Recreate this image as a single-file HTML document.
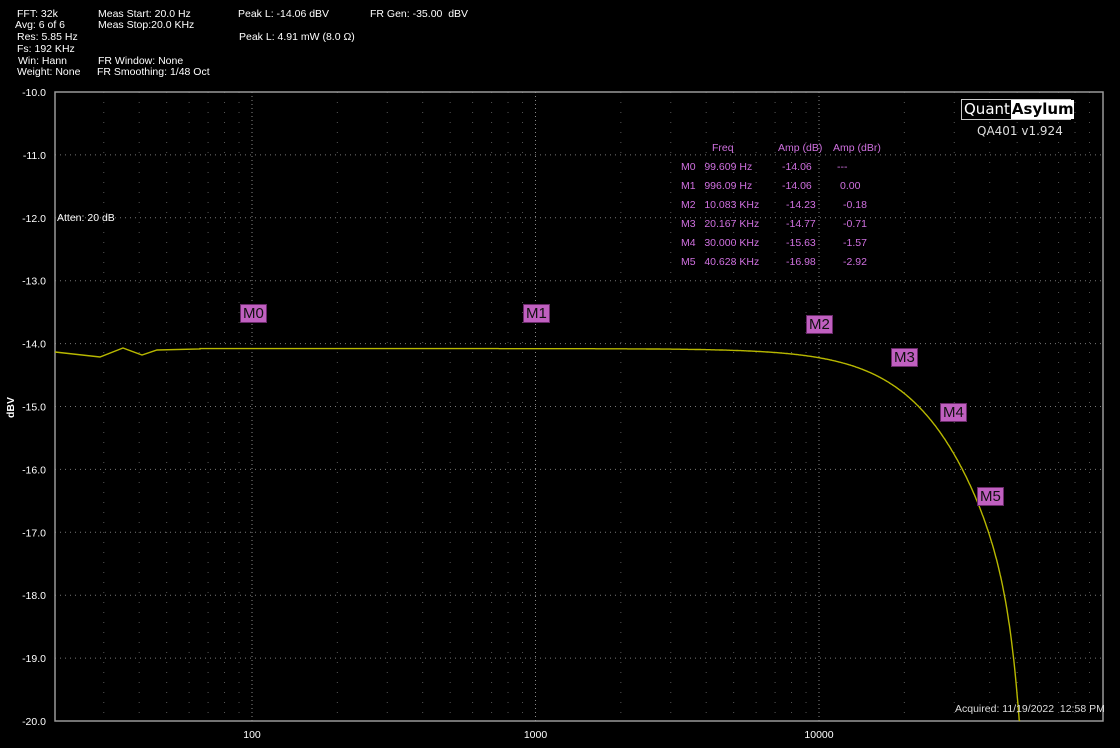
<!DOCTYPE html>
<html><head><meta charset="utf-8"><style>
html,body{margin:0;padding:0;background:#000;width:1120px;height:748px;overflow:hidden}
body{position:relative;font-family:"Liberation Sans",Arial,sans-serif;color:#fff;font-size:10.5px}
.t{position:absolute;white-space:nowrap}
.mk{position:absolute;background:#c060c0;border:1px solid #6a2a6a;color:#111;font-size:15px;line-height:17px;padding:0 2px;width:21px;height:17px}
.tb{position:absolute;color:#d070e0;font-size:10.5px;white-space:nowrap}
</style></head><body>
<div class="t" style="left:17px;top:8px">FFT: 32k</div>
<div class="t" style="left:15px;top:19px">Avg: 6 of 6</div>
<div class="t" style="left:17px;top:31px">Res: 5.85 Hz</div>
<div class="t" style="left:17px;top:43px">Fs: 192 KHz</div>
<div class="t" style="left:18px;top:55px">Win: Hann</div>
<div class="t" style="left:17px;top:66px">Weight: None</div>
<div class="t" style="left:98px;top:8px">Meas Start: 20.0 Hz</div>
<div class="t" style="left:98px;top:19px">Meas Stop:20.0 KHz</div>
<div class="t" style="left:98px;top:55px">FR Window: None</div>
<div class="t" style="left:97px;top:66px">FR Smoothing: 1/48 Oct</div>
<div class="t" style="left:238px;top:8px">Peak L: -14.06 dBV</div>
<div class="t" style="left:239px;top:31px">Peak L: 4.91 mW (8.0 Ω)</div>
<div class="t" style="left:370px;top:8px">FR Gen: -35.00 &nbsp;dBV</div>
<svg id="s" width="1120" height="748" style="position:absolute;left:0;top:0"></svg>
<div class="t" style="left:57px;top:212px">Atten: 20 dB</div>
<div class="t" style="left:5px;transform:rotate(-90deg);transform-origin:left top;font-weight:bold;top:418px">dBV</div>
<div style="position:absolute;left:961px;top:99px;width:110px;height:21px;border:1px solid #ccc;box-sizing:border-box;font-family:'DejaVu Sans',sans-serif;font-size:15px;line-height:19px;display:flex">
<span style="color:#fff;padding:0 1px 0 2px">Quant</span><span style="background:#fff;color:#000;font-weight:bold;flex:1;padding-left:1px">Asylum</span></div>
<div class="t" style="left:977px;top:124px;font-size:12px;font-family:'DejaVu Sans',sans-serif;color:#ddd">QA401 v1.924</div>
<div class="tb" style="left:712px;top:142px">Freq</div>
<div class="tb" style="left:778px;top:142px">Amp (dB)</div>
<div class="tb" style="left:833px;top:142px">Amp (dBr)</div>
<div class="tb" style="left:681px;top:161px">M0&nbsp;&nbsp; 99.609 Hz</div><div class="tb" style="left:782px;top:161px">-14.06</div><div class="tb" style="left:837px;top:161px">---</div>
<div class="tb" style="left:681px;top:180px">M1&nbsp;&nbsp; 996.09 Hz</div><div class="tb" style="left:782px;top:180px">-14.06</div><div class="tb" style="left:840px;top:180px">0.00</div>
<div class="tb" style="left:681px;top:199px">M2&nbsp;&nbsp; 10.083 KHz</div><div class="tb" style="left:786px;top:199px">-14.23</div><div class="tb" style="left:843px;top:199px">-0.18</div>
<div class="tb" style="left:681px;top:218px">M3&nbsp;&nbsp; 20.167 KHz</div><div class="tb" style="left:786px;top:218px">-14.77</div><div class="tb" style="left:843px;top:218px">-0.71</div>
<div class="tb" style="left:681px;top:237px">M4&nbsp;&nbsp; 30.000 KHz</div><div class="tb" style="left:786px;top:237px">-15.63</div><div class="tb" style="left:843px;top:237px">-1.57</div>
<div class="tb" style="left:681px;top:256px">M5&nbsp;&nbsp; 40.628 KHz</div><div class="tb" style="left:786px;top:256px">-16.98</div><div class="tb" style="left:843px;top:256px">-2.92</div>
<div class="mk" style="left:240px;top:304px">M0</div>
<div class="mk" style="left:523px;top:304px">M1</div>
<div class="mk" style="left:806px;top:315px">M2</div>
<div class="mk" style="left:891px;top:348px">M3</div>
<div class="mk" style="left:940px;top:403px">M4</div>
<div class="mk" style="left:977px;top:487px">M5</div>
<div class="t" style="left:955px;top:703px;color:#ddd">Acquired: 11/19/2022 &nbsp;12:58 PM</div>
<script>
var s=document.getElementById('s'),h='';
var L=55,R=1103,T=92,B=721,D=283.5;
function X(f){return 252+(Math.log10(f)-2)*D}
function Y(d){return T+(-10-d)*(B-T)/10}
for(var i=0;i<=10;i++){var y=Y(-10-i);if(i>0&&i<10)h+='<line x1="'+L+'" x2="'+R+'" y1="'+y+'" y2="'+y+'" stroke="#777" stroke-dasharray="1 4"/>';
h+='<text x="46" y="'+(y+4)+'" fill="#fff" font-size="10.5" text-anchor="end" font-family="Liberation Sans">'+(-10-i).toFixed(1)+'</text>';}
var dec=[10,100,1000,10000];
dec.forEach(function(d){for(var k=1;k<10;k++){var f=d*k;if(f<=20||f>=100000)continue;var x=X(f);
h+='<line x1="'+x+'" x2="'+x+'" y1="'+T+'" y2="'+B+'" stroke="'+(k==1?'#888':'#555')+'" stroke-dasharray="1 '+(k==1?3:'9')+'"/>';}});
[100,1000,10000].forEach(function(f){h+='<text x="'+X(f)+'" y="738" fill="#fff" font-size="10.5" text-anchor="middle" font-family="Liberation Sans">'+f+'</text>';});
h+='<rect x="'+L+'" y="'+T+'" width="'+(R-L)+'" height="'+(B-T)+'" fill="none" stroke="#999" stroke-width="1.5"/>';
var pts=[[55,352],[100,357],[123,348],[142,355],[157,350],[200,349]];
var p='M'+pts.map(function(a){return a.join(',')}).join(' L');
function dev(f){return -10*Math.log10(1+Math.pow(f/41000,2.4))-1.7*Math.pow(f/51000,12)}
for(var f=Math.pow(10,2+(200-252)/D);f<=60000;f*=1.005){var d=-14.08+dev(f);var y=Y(d);if(y>B)y=B;p+=' L'+X(f).toFixed(1)+','+y.toFixed(1);if(y>=B)break;}
h+='<path d="'+p+'" fill="none" stroke="#b8b800" stroke-width="1.4"/>';
s.innerHTML=h;
</script>
</body></html>
